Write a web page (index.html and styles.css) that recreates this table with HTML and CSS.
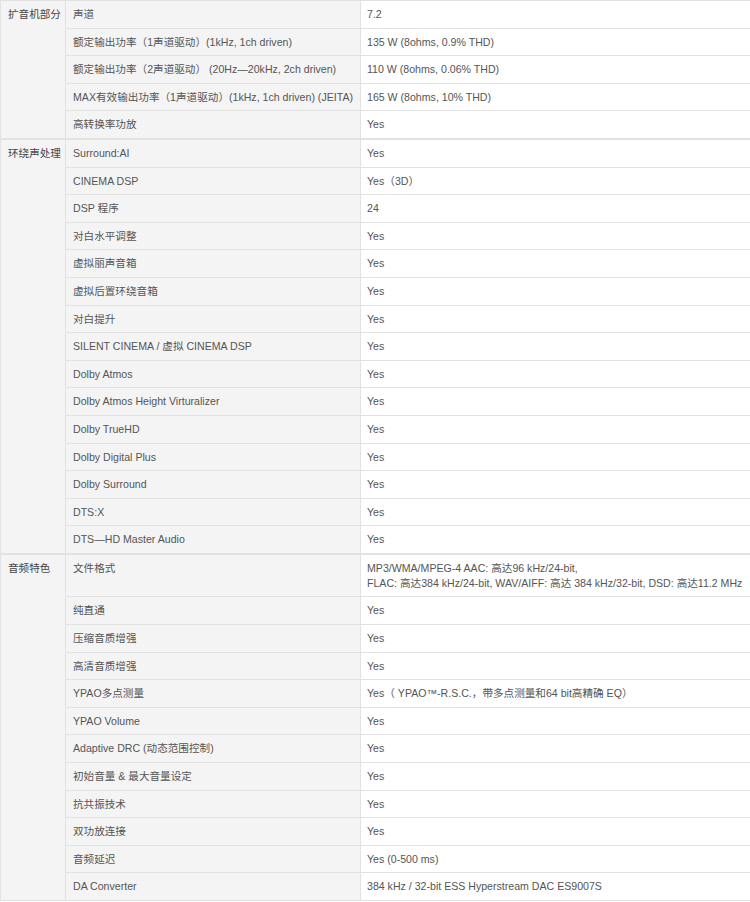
FILE: index.html
```html
<!DOCTYPE html>
<html lang="zh-CN">
<head>
    <meta charset="UTF-8">
    <title>规格</title>
    <link rel="stylesheet" href="styles.css">
</head>
<body>
    <table class="spec">
        <colgroup>
            <col class="col-cat">
            <col class="col-name">
            <col class="col-value">
        </colgroup>
        <!-- 扩音机部分 -->
        <tbody>
            <tr><td class="cat" rowspan="5">扩音机部分</td><td class="name">声道</td><td class="value">7.2</td></tr>
            <tr><td class="name">额定输出功率（1声道驱动）(1kHz, 1ch driven)</td><td class="value">135 W (8ohms, 0.9% THD)</td></tr>
            <tr><td class="name">额定输出功率（2声道驱动） (20Hz—20kHz, 2ch driven)</td><td class="value">110 W (8ohms, 0.06% THD)</td></tr>
            <tr><td class="name">MAX有效输出功率（1声道驱动）(1kHz, 1ch driven) (JEITA)</td><td class="value">165 W (8ohms, 10% THD)</td></tr>
            <tr><td class="name">高转换率功放</td><td class="value">Yes</td></tr>
        </tbody>
        <!-- 环绕声处理 -->
        <tbody>
            <tr><td class="cat" rowspan="15">环绕声处理</td><td class="name">Surround:AI</td><td class="value">Yes</td></tr>
            <tr><td class="name">CINEMA DSP</td><td class="value">Yes（3D）</td></tr>
            <tr><td class="name">DSP 程序</td><td class="value">24</td></tr>
            <tr><td class="name">对白水平调整</td><td class="value">Yes</td></tr>
            <tr><td class="name">虚拟丽声音箱</td><td class="value">Yes</td></tr>
            <tr><td class="name">虚拟后置环绕音箱</td><td class="value">Yes</td></tr>
            <tr><td class="name">对白提升</td><td class="value">Yes</td></tr>
            <tr><td class="name">SILENT CINEMA / 虚拟 CINEMA DSP</td><td class="value">Yes</td></tr>
            <tr><td class="name">Dolby Atmos</td><td class="value">Yes</td></tr>
            <tr><td class="name">Dolby Atmos Height Virturalizer</td><td class="value">Yes</td></tr>
            <tr><td class="name">Dolby TrueHD</td><td class="value">Yes</td></tr>
            <tr><td class="name">Dolby Digital Plus</td><td class="value">Yes</td></tr>
            <tr><td class="name">Dolby Surround</td><td class="value">Yes</td></tr>
            <tr><td class="name">DTS:X</td><td class="value">Yes</td></tr>
            <tr><td class="name">DTS—HD Master Audio</td><td class="value">Yes</td></tr>
        </tbody>
        <!-- 音频特色 -->
        <tbody>
            <tr><td class="cat" rowspan="12">音频特色</td><td class="name">文件格式</td><td class="value">MP3/WMA/MPEG-4 AAC: 高达96 kHz/24-bit,<br>FLAC: 高达384 kHz/24-bit, WAV/AIFF: 高达 384 kHz/32-bit, DSD: 高达11.2 MHz</td></tr>
            <tr><td class="name">纯直通</td><td class="value">Yes</td></tr>
            <tr><td class="name">压缩音质增强</td><td class="value">Yes</td></tr>
            <tr><td class="name">高清音质增强</td><td class="value">Yes</td></tr>
            <tr><td class="name">YPAO多点测量</td><td class="value">Yes（ YPAO™-R.S.C.，带多点测量和64 bit高精确 EQ）</td></tr>
            <tr><td class="name">YPAO Volume</td><td class="value">Yes</td></tr>
            <tr><td class="name">Adaptive DRC (动态范围控制)</td><td class="value">Yes</td></tr>
            <tr><td class="name">初始音量 &amp; 最大音量设定</td><td class="value">Yes</td></tr>
            <tr><td class="name">抗共振技术</td><td class="value">Yes</td></tr>
            <tr><td class="name">双功放连接</td><td class="value">Yes</td></tr>
            <tr><td class="name">音频延迟</td><td class="value">Yes (0-500 ms)</td></tr>
            <tr><td class="name">DA Converter</td><td class="value">384 kHz / 32-bit ESS Hyperstream DAC ES9007S</td></tr>
        </tbody>
    </table>
</body>
</html>
```

FILE: styles.css
```css
body {
    margin: 0;
    background: #fff;
    font-family: "Liberation Sans", "Noto Sans CJK SC", sans-serif;
    font-size: 10.6px;
    color: #555;
}
.spec {
    width: 750px;
    border-collapse: collapse;
    table-layout: fixed;
}
.col-cat { width: 65px; }
.col-name { width: 295px; }
.col-value { width: 390px; }
.spec td {
    border: 1px solid #e2e2e2;
    padding: 6px 4px 5.6px 7px;
    line-height: 15px;
    vertical-align: top;
    white-space: nowrap;
    overflow: hidden;
}
.spec tbody + tbody {
    border-top: 2px solid #e2e2e2;
}
.spec .cat {
    background: #f4f4f4;
    color: #444;
    padding-left: 7px;
}
.spec .name {
    background: #f4f4f4;
}
.spec .value {
    background: #fff;
    padding-left: 6px;
}
```
